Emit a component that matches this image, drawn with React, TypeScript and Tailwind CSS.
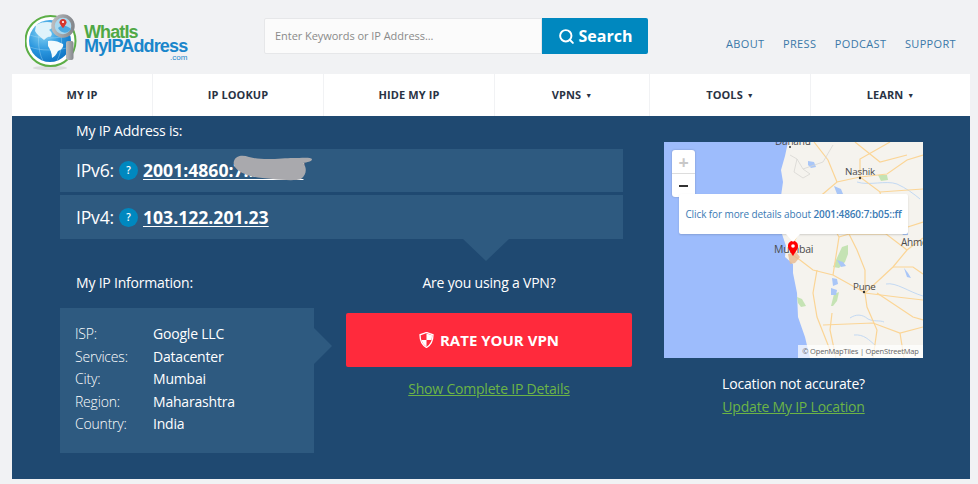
import { Search } from 'lucide-react';

const navItems = [
  { label: 'MY IP', width: 'w-[140px]' },
  { label: 'IP LOOKUP', width: 'w-[170px]' },
  { label: 'HIDE MY IP', width: 'w-[170px]' },
  { label: 'VPNS', width: 'w-[154px]', caret: true },
  { label: 'TOOLS', width: 'w-[160px]', caret: true },
  { label: 'LEARN', width: 'flex-1', caret: true },
];

const ipInfo = [
  ['ISP:', 'Google LLC'],
  ['Services:', 'Datacenter'],
  ['City:', 'Mumbai'],
  ['Region:', 'Maharashtra'],
  ['Country:', 'India'],
];

function Logo() {
  return (
    <div className="flex items-start">
      <svg width="56" height="60" viewBox="0 0 56 60" className="mt-[13px] shrink-0">
        <defs>
          <radialGradient id="globe" cx="35%" cy="30%" r="80%">
            <stop offset="0%" stopColor="#8ad6f5" />
            <stop offset="55%" stopColor="#2a96de" />
            <stop offset="100%" stopColor="#0b6fc0" />
          </radialGradient>
          <linearGradient id="steel" x1="0" y1="0" x2="1" y2="0">
            <stop offset="0%" stopColor="#b9bbbe" />
            <stop offset="100%" stopColor="#85888c" />
          </linearGradient>
        </defs>
        <ellipse cx="25" cy="55" rx="17" ry="2" fill="#dcdddf" />
        <circle cx="25.500" cy="28" r="25" fill="#fff" stroke="#5cae46" strokeWidth="2" />
        <circle cx="25" cy="28" r="21" fill="url(#globe)" />
        <g stroke="#bfe4f7" strokeWidth="0.500" fill="none" opacity="0.7">
          <path d="M5 22 C15 26 33 26 45 22 M5 34 C15 38 33 38 45 34" />
          <path d="M18 8 C12 20 12 36 18 48 M32 8 C38 20 38 36 32 48" />
        </g>
        <path d="M11 12 C16 9 23 8 28 10 C29 14 26 16 24 17 C27 19 28 22 25 24 C22 23 21 26 19 27 C16 24 12 22 10 18 Z" fill="#dff3fb" />
        <path d="M23 28 C28 27 33 28 38 31 C39 34 36 37 33 38 C31 42 29 44 27 45 C27 40 25 36 23 33 Z" fill="#f2fafd" />
        <rect x="41" y="28" width="7.500" height="19" rx="2" fill="url(#steel)" />
        <circle cx="38" cy="13" r="10" fill="#a8d8ef" stroke="url(#steel)" strokeWidth="3.500" />
        <path d="M33 15 C37 11 43 13 46 16 C43 21 36 21 33 15 Z" fill="#4da9e0" />
        <path d="M38 6 C36 6 34.500 7.400 34.500 9.200 C34.500 11.400 38 15 38 15 C38 15 41.500 11.400 41.500 9.200 C41.500 7.400 40 6 38 6 Z" fill="#d8372d" />
        <circle cx="38" cy="9" r="1.100" fill="#fff" />
      </svg>
      <div className="ml-[3px] mt-[25px] flex flex-col font-['Liberation_Sans',Arial,sans-serif] font-bold">
        <span className="text-[18px] leading-[14px] tracking-[-0.9px] text-[#4fa845]">WhatIs</span>
        <span className="text-[18px] leading-[14px] tracking-[-0.85px] text-[#1a86cb]">MyIPAddress</span>
        <span className="self-end pt-[1px] text-[8px] leading-[7px] font-normal text-[#1a86cb]">.com</span>
      </div>
    </div>
  );
}

function HelpBadge() {
  return (
    <span className="mx-[5px] flex h-[19px] w-[19px] items-center justify-center rounded-full bg-[#0088bf] text-[10px] font-semibold text-white">
      ?
    </span>
  );
}

function IpMap() {
  return (
    <div className="relative h-[216px] w-[259px] overflow-hidden bg-[#9dbcfc]">
      <svg width="259" height="216" viewBox="0 0 259 216" className="block">
        {/* land */}
        <path d="M124 0 L121 14 L117 28 L119 40 L117 54 L120 72 L118 92 L122 104 L121 115 L129 122 L129 131 L133 151 L134 175 L141 195 L146 216 L259 216 L259 0 Z" fill="#f5f3ee" />
        {/* forest */}
        <path d="M178 105 l6 -2 0 9 -3 8 -6 6 -6 -1 3 -7 z" fill="#c5e3b4" />
        <path d="M170 152 l5 -2 -2 9 -4 5 -2 0 z" fill="#c5e3b4" />
        <path d="M133 155 l5 2 4 7 -5 1 -3 -4 z" fill="#c5e3b4" />
        <path d="M214 33 l9 0 1 5 -7 1 z" fill="#c5e3b4" />
        {/* water */}
        <g fill="#a9c6f7">
          <path d="M144 19 l6 1 2 5 -5 1 -3 -3 z" />
          <path d="M170 44 l7 3 2 5 -6 0 z" />
          <path d="M173 118 l6 2 3 4 -5 1 z" />
          <path d="M168 136 l5 1 1 5 -5 2 z" />
          <path d="M167 146 l6 2 -1 5 -5 0 z" />
          <path d="M240 126 l4 5 3 5 -4 -1 z" />
          <path d="M236 88 l8 2 0 3 -5 0 z" />
        </g>
        <g stroke="#c3d9f3" strokeWidth="1" fill="none">
          <path d="M193 40 C205 44 222 38 233 42 C242 46 250 52 256 57" />
          <path d="M186 176 C192 172 198 172 204 177 C210 180 216 178 220 180" />
          <path d="M190 193 C200 192 205 198 212 204" />
          <path d="M222 142 C232 140 245 150 259 154" />
        </g>
        {/* roads */}
        <g stroke="#fbd596" strokeWidth="1.200" fill="none">
          <path d="M127 112 L136 118 L149 128 L169 133 L196 148 L201 151 L233 155 L259 158" />
          <path d="M201 151 L229 125 L243 108 L259 96" />
          <path d="M201 151 L201 128 L193 108 L185 92" />
          <path d="M201 151 L203 165 L213 188 L209 216" />
          <path d="M159 183 L209 181 L236 191 L259 185" />
          <path d="M153 128 L149 151 L153 175 L166 208" />
          <path d="M168 171 L166 188 L172 216" />
          <path d="M213 151 L249 175 L259 178" />
          <path d="M229 125 L249 125 L259 132" />
          <path d="M236 191 L240 216" />
          <path d="M196 35 L223 32 L243 18 L259 13" />
          <path d="M196 35 L173 40 L153 57 L140 80 L130 100" />
          <path d="M196 35 L196 17 L226 0" />
          <path d="M196 35 L216 50 L259 47" />
          <path d="M191 0 L216 20 L243 13" />
          <path d="M216 50 L222 92 L243 108" />
          <path d="M173 40 L164 18 L150 0" />
          <path d="M175 95 L185 92 L222 92 L259 80" />
          <path d="M153 57 L175 95 L169 133" />
        </g>
        <path d="M126 13 L133 17 L139 27 L159 20 L169 3 M133 17 L130 30 L139 36 L146 32 L139 27" stroke="#d8d7d3" strokeWidth="0.800" fill="none" />
        {/* city labels */}
        <g fontFamily="'Open Sans', sans-serif" fill="#4a4a4a">
          <text x="111" y="3" fontSize="10">Dahanu</text>
          <circle cx="126" cy="5" r="1" fill="#333" />
          <text x="181" y="33" fontSize="9.800">Nashik</text>
          <circle cx="196" cy="36" r="1.200" fill="#333" />
          <text x="110" y="111" fontSize="10.500">Mumbai</text>
          <text x="189" y="148" fontSize="9.800">Pune</text>
          <circle cx="200" cy="150" r="1.200" fill="#333" />
          <text x="237" y="104" fontSize="10">Ahme</text>
        </g>
        <path d="M124 112 l8 -2 4 5 -5 6 -5 1 z" fill="#e9b98d" opacity="0.8" />
        {/* pin */}
        <path d="M129 114 C126 109 124 107 124 104 C124 101 126 99 129 99 C132 99 134 101 134 104 C134 107 132 109 129 114 Z" fill="#f00" />
        <circle cx="129" cy="104" r="1.800" fill="#fff" />
      </svg>

      {/* zoom control */}
      <div className="absolute left-[8px] top-[8px] flex h-[47px] w-[23px] flex-col rounded-[3px] bg-white shadow-[0_0_2px_rgba(0,0,0,0.25)]">
        <div className="flex h-[24px] items-center justify-center border-b border-[#ddd] text-[18px] font-bold leading-none text-[#c8c8c8]">+</div>
        <div className="flex flex-1 items-center justify-center">
          <span className="h-[2px] w-[9px] bg-[#333]" />
        </div>
      </div>

      {/* popup */}
      <div className="absolute left-[15px] top-[52px] flex h-[40px] w-[229px] items-center justify-center rounded-[2px] bg-white text-[10px] tracking-[-0.1px] text-[#3a7ab4] shadow-[0_1px_2px_rgba(0,0,0,0.15)]">
        <span>Click for more details about <b className="font-semibold">2001:4860:7:b05::ff</b></span>
      </div>
      <div className="absolute left-[122px] top-[92px] h-0 w-0 border-x-[7px] border-t-[8px] border-x-transparent border-t-white" />

      <div className="absolute bottom-0 right-0 flex h-[13px] w-[125px] items-center justify-center bg-white/70 text-[7.500px] text-[#666]">
        © OpenMapTiles | OpenStreetMap
      </div>
    </div>
  );
}

export default function App() {
  return (
    <div className="h-[484px] w-[978px] overflow-hidden bg-[#f1f2f4] font-['Open_Sans',sans-serif]">
      {/* Header */}
      <header className="flex h-[74px] items-start">
        <div className="w-[264px] pl-[25px]">
          <Logo />
        </div>
        <div className="mt-[18px] flex h-[36px]">
          <div className="flex h-[36px] w-[278px] items-center rounded-l-[2px] border border-[#e6e7e9] bg-[#fbfbfb] pl-[10px] text-[11px] tracking-[-0.05px] text-[#8a8a8a]">
            Enter Keywords or IP Address...
          </div>
          <button className="flex w-[106px] items-center justify-center gap-[4px] rounded-r-[2px] bg-[#0088bf] text-[16px] font-bold text-white">
            <Search size={17} strokeWidth={2.75} />
            Search
          </button>
        </div>
        <nav className="ml-[78px] mt-[36px] flex gap-[18.500px] text-[11px] tracking-[0.35px] text-[#3a78a8]">
          <span>ABOUT</span>
          <span>PRESS</span>
          <span>PODCAST</span>
          <span>SUPPORT</span>
        </nav>
      </header>

      {/* Nav */}
      <div className="mx-[12px] flex h-[42px] w-[958px] gap-[1px] bg-[#f1f2f4]">
        {navItems.map((item) => (
          <div key={item.label} className={`${item.width} flex items-center justify-center gap-[4px] bg-white text-[11px] font-bold tracking-[0.1px] text-[#2a3344]`}>
            {item.label}
            {item.caret && <span className="text-[7px] leading-none">▼</span>}
          </div>
        ))}
      </div>

      {/* Main panel */}
      <main className="mx-[12px] flex h-[363px] w-[958px] bg-[#1f4971] pl-[48px] text-white">
        <section className="w-[572px] tracking-[-0.2px]">
          <p className="ml-[16px] flex h-[33px] items-start pt-[5px] text-[14px] leading-[19px]">My IP Address is:</p>
          <div className="flex h-[43px] w-[563px] items-center bg-[#2e5a80] pl-[16px] text-[17.600px]">
            IPv6:
            <HelpBadge />
            <span className="relative font-bold tracking-normal underline underline-offset-2">
              2001:4860:7:b05::ff
              <svg width="80" height="27" viewBox="0 0 80 27" className="absolute left-[90px] top-[-2px]">
                <path d="M1 6 C3 0 10 0 16 2 C30 6 50 3 60 3 C68 3 78 2 79 4 C79 7 74 7 70 8 C74 12 74 20 68 24 C62 26 50 25 40 24 C28 23 20 22 14 20 C6 17 -1 12 1 6 Z" fill="#a9a9ad" />
              </svg>
            </span>
          </div>
          <div className="relative mt-[3px] flex h-[44px] w-[563px] items-center bg-[#2e5a80] pl-[16px] text-[17.600px]">
            IPv4:
            <HelpBadge />
            <span className="font-bold tracking-normal underline underline-offset-2">103.122.201.23</span>
            <div className="absolute left-[403px] top-full h-0 w-0 border-x-[23px] border-t-[22px] border-x-transparent border-t-[#2e5a80]" />
          </div>

          <div className="mt-[33px] flex">
            <div className="w-[286px]">
              <p className="ml-[16px] text-[14px] leading-[22px]">My IP Information:</p>
              <div className="relative mt-[14px] flex h-[145px] w-[254px] flex-col gap-[3.600px] bg-[#2e5a80] pl-[15px] pt-[16px] text-[14px] leading-[19px]">
                {ipInfo.map(([label, value]) => (
                  <div key={label} className="flex">
                    <span className="w-[78px] font-light">{label}</span>
                    <span>{value}</span>
                  </div>
                ))}
                <div className="absolute left-full top-[20px] h-0 w-0 border-y-[18px] border-l-[18px] border-y-transparent border-l-[#2e5a80]" />
              </div>
            </div>
            <div className="flex w-[286px] flex-col items-center">
              <p className="text-[14px] leading-[22px]">Are you using a VPN?</p>
              <button className="mt-[19px] flex h-[54px] w-[286px] items-center justify-center gap-[6px] rounded-[2px] bg-[#ff2a3c] text-[15px] font-bold tracking-normal text-white">
                <svg width="15" height="16" viewBox="0 0 15 16">
                  <path d="M7.500 0.500 L14 2.800 C14 8.500 12 13 7.500 15.500 C3 13 1 8.500 1 2.800 Z" fill="none" stroke="#fff" strokeWidth="1.300" />
                  <path d="M7.500 1.500 L13 3.300 C13 5 12.900 6.500 12.500 8 L7.500 8 Z M7.500 8 L2.600 8 C3.300 10.800 4.800 13 7.500 14.500 Z" fill="#fff" />
                </svg>
                RATE YOUR VPN
              </button>
              <a className="mt-[12px] text-[14px] leading-[20px] text-[#6cb446] underline">Show Complete IP Details</a>
            </div>
          </div>
        </section>

        <aside className="ml-[32px] flex w-[259px] flex-col items-center pt-[26px] tracking-[-0.2px]">
          <IpMap />
          <p className="mt-[16px] text-[14px] leading-[20px]">Location not accurate?</p>
          <a className="mt-[3px] text-[14px] leading-[20px] text-[#6cb446] underline">Update My IP Location</a>
        </aside>
      </main>
    </div>
  );
}
